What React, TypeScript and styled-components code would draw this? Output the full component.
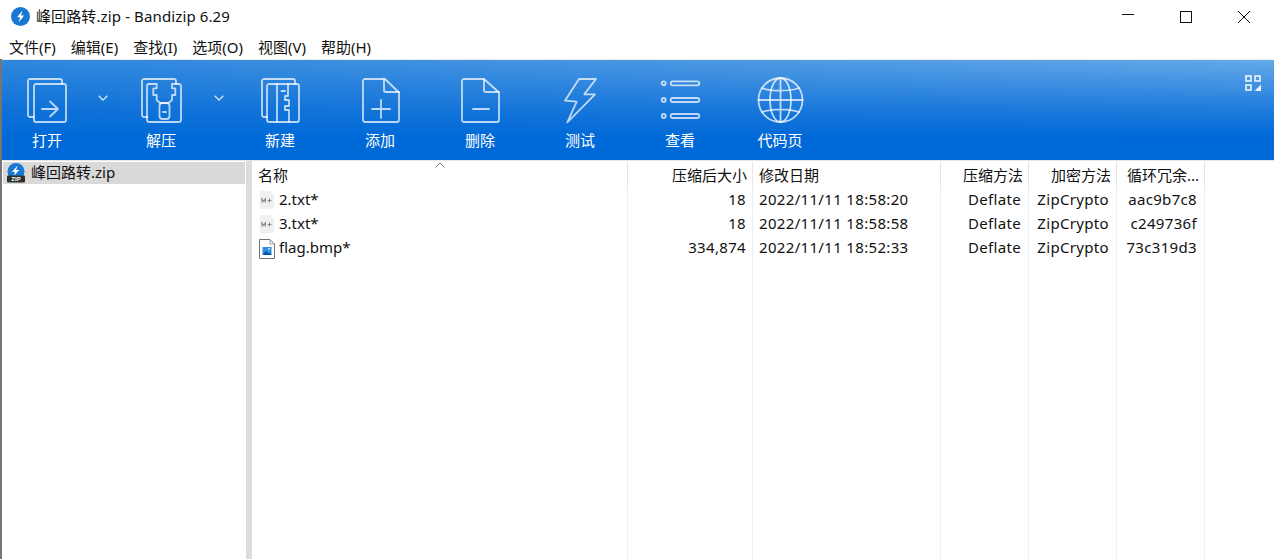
import * as React from "react";
import styled, {createGlobalStyle} from "styled-components";

const FONT = `"Noto Sans", "Noto Sans CJK SC", sans-serif`;
const COLUMNS = "376px 125px 188px 88px 88px 88px 1fr";

const GlobalStyle = createGlobalStyle`
  html, body { margin: 0; padding: 0; background: #fff; }
  body { font-family: ${FONT}; color: #111; overflow: hidden; }
`;

const Page = styled.div`
  display: flex;
  flex-direction: column;
  height: 559px;
  overflow: hidden;
`;

const TitleBar = styled.div`
  display: flex;
  align-items: center;
  height: 33px;
  padding-left: 11px;
  flex: none;
`;
const TitleText = styled.div`
  margin: 0 0 2px 6px;
  font-size: 15px;
  letter-spacing: 0.12px;
  line-height: 20px;
  flex: 1;
`;
const WinButton = styled.div`
  width: 58px;
  height: 33px;
  display: flex;
  align-items: center;
  justify-content: center;
`;
const WinButtons = styled.div`
  display: flex;
  margin-right: 1px;
`;

const MenuBar = styled.div`
  display: flex;
  align-items: center;
  gap: 15px;
  height: 26px;
  padding-left: 9px;
  font-size: 15px;
  flex: none;
`;
const MenuItem = styled.div`
  white-space: nowrap;
`;

const Main = styled.div`
  flex: 1;
  display: flex;
  flex-direction: column;
  border-left: 2px solid #757575;
  min-height: 0;
`;

const Toolbar = styled.div`
  flex: none;
  height: 100px;
  display: flex;
  border-top: 1px solid #ececec;
  border-bottom: 1px solid #e6e6e6;
  background:
    linear-gradient(180deg, rgba(0, 104, 214, 0) 0%, rgba(0, 104, 214, 0.7) 50%, #0069d8 78%),
    linear-gradient(90deg, #2f87dd 0%, #4f9ae3 60%, #65a9e9 100%);
`;
const ToolButton = styled.div<{$w: number}>`
  width: ${({$w}) => $w}px;
  display: flex;
  flex-direction: column;
  align-items: center;
  padding-top: 16px;
  flex: none;
  color: #fff;
  font-size: 15px;
  svg { display: block; }
`;
const ToolLabel = styled.div`
  margin-top: 4px;
  line-height: 24px;
`;
const Chevron = styled.div<{$w: number}>`
  width: ${({$w}) => $w}px;
  flex: none;
  display: flex;
  justify-content: center;
  align-items: flex-start;
  padding-top: 35px;
`;
const LayoutToggle = styled.div`
  margin: 14px 13px 0 auto;
`;

const Panes = styled.div`
  flex: 1;
  display: flex;
  min-height: 0;
`;
const TreePane = styled.div`
  width: 244px;
  flex: none;
  padding: 1px 1px 0 1px;
  box-sizing: border-box;
`;
const TreeRow = styled.div`
  display: flex;
  align-items: center;
  height: 22px;
  background: #d9d9d9;
  padding-left: 3px;
  font-size: 15px;
`;
const TreeLabel = styled.span`
  margin: 0 0 4px 5px;
`;
const Splitter = styled.div`
  width: 6px;
  flex: none;
  background: #dcdcdc;
`;

const Table = styled.div`
  flex: 1;
  display: flex;
  flex-direction: column;
  min-width: 0;
  position: relative;
`;
const Row = styled.div<{$fill?: boolean}>`
  display: grid;
  grid-template-columns: ${COLUMNS};
  flex: ${({$fill}) => ($fill ? 1 : "none")};
  height: ${({$fill}) => ($fill ? "auto" : "24px")};
  font-size: 15px;
  line-height: 23px;
  letter-spacing: 0.33px;
  white-space: nowrap;
`;
const HeaderRow = styled(Row)`
  height: 27px;
  line-height: 26px;
  letter-spacing: 0;
`;
const Cell = styled.div<{$right?: boolean; $pad?: number}>`
  box-sizing: border-box;
  border-right: 1px solid #e6f0fa;
  text-align: ${({$right}) => ($right ? "right" : "left")};
  padding: 0 ${({$pad}) => $pad ?? 6}px 0 6px;
  overflow: hidden;
`;
const HeadCell = styled(Cell)`
  border-right: 1px solid #e5e5e5;
  margin-top: 1px;
`;
const NameCell = styled(Cell)`
  display: flex;
  align-items: flex-start;
  padding-left: 7px;
  letter-spacing: 0;
  svg { display: block; flex: none; margin-top: 3px; }
`;
const FileName = styled.span`
  margin-left: 4px;
`;
const SortCaret = styled.div`
  position: absolute;
  left: 183px;
  top: 1px;
  svg { display: block; }
`;

const stroke = {fill: "none", stroke: "rgba(255,255,255,0.72)", strokeWidth: 1.8, strokeLinejoin: "round" as const, strokeLinecap: "round" as const};
const ToolIcon = ({children}: {children: React.ReactNode}) => (
  <svg width="48" height="48" viewBox="0 0 48 48" {...stroke}>{children}</svg>
);

const OpenIcon = () => (
  <ToolIcon>
    <path d="M11 41H7a2 2 0 0 1-2-2V5a2 2 0 0 1 2-2h30a2 2 0 0 1 2 2v3" />
    <rect x="11" y="8" width="32" height="38" rx="2" />
    <path d="M19 33h16M27 25.500l8 7.500-8 7.500" />
  </ToolIcon>
);
const ExtractIcon = () => (
  <ToolIcon>
    <path d="M10.500 41H7a2 2 0 0 1-2-2V5a2 2 0 0 1 2-2h30a2 2 0 0 1 2 2v3" />
    <path d="M19.700 8H12a2 2 0 0 0-2 2v34a2 2 0 0 0 2 2h30a2 2 0 0 0 2-2V10a2 2 0 0 0-2-2h-7v4.300h3.300V19H35v5l-3.500 3H23l-3.300-3v-5h-3.400v-6.700h3.400z" />
    <rect x="22.500" y="27" width="10" height="16" rx="3" />
    <path d="M26 36h3" />
  </ToolIcon>
);
const NewIcon = () => (
  <ToolIcon>
    <path d="M11 41H8a2 2 0 0 1-2-2V5a2 2 0 0 1 2-2h29a2 2 0 0 1 2 2v3" />
    <rect x="11" y="8" width="32" height="38" rx="2" />
    <path d="M21 8v38M32 8v12h-3v4h4v6h-4v4h4v12M25.500 15h3.500" />
  </ToolIcon>
);
const AddIcon = () => (
  <ToolIcon>
    <path d="M9 3h20l14 13.500V44a2 2 0 0 1-2 2H9a2 2 0 0 1-2-2V5a2 2 0 0 1 2-2z" />
    <path d="M28 3.500V14a2 2 0 0 0 2 2h13M25 24v18M16 33h18" />
  </ToolIcon>
);
const DeleteIcon = () => (
  <ToolIcon>
    <path d="M8 3h20l15 13.500V44a2 2 0 0 1-2 2H8a2 2 0 0 1-2-2V5a2 2 0 0 1 2-2z" />
    <path d="M28 3.500V14a2 2 0 0 0 2 2h13M17 33h16" />
  </ToolIcon>
);
const TestIcon = () => (
  <ToolIcon>
    <path d="M23 3h17L28.300 18.300H39L11.300 46.300l9.400-20.600L9 24.700z" />
  </ToolIcon>
);
const ViewIcon = () => (
  <ToolIcon>
    {[7.3, 24, 40].map(y => (
      <React.Fragment key={y}>
        <circle cx="7.700" cy={y} r="2" />
        <rect x="14.700" y={y - 2} width="28.600" height="4" rx="2" />
      </React.Fragment>
    ))}
  </ToolIcon>
);
const GlobeIcon = () => (
  <ToolIcon>
    <circle cx="24.500" cy="24" r="22" />
    <ellipse cx="24.500" cy="24" rx="10.500" ry="22" />
    <path d="M24.500 2v44M2.500 24h44M6 12c10 3.500 27 3.500 37 0M6 36c10-3.500 27-3.500 37 0" />
  </ToolIcon>
);
const ChevronIcon = () => (
  <svg width="10" height="6" viewBox="0 0 10 6" fill="none" stroke="rgba(255,255,255,0.8)" strokeWidth="1.3" style={{display: "block"}}>
    <path d="M.7.7 5 5 9.300.7" />
  </svg>
);
const GridToggleIcon = () => (
  <svg width="16" height="16" viewBox="0 0 16 16">
    <g fill="none" stroke="rgba(255,255,255,0.85)" strokeWidth="1.700">
      <rect x="1" y="1" width="5" height="5" />
      <rect x="10" y="1" width="5" height="5" />
      <rect x="1" y="10" width="5" height="5" />
    </g>
    <path d="M16 9.500V16H9.500z" fill="rgba(255,255,255,0.9)" />
  </svg>
);
const AppIcon = () => (
  <svg width="19" height="19" viewBox="0 0 19 19">
    <circle cx="9.500" cy="9.500" r="9.500" fill="#1a78d2" />
    <path d="M11.500 3.500 6 10.200h3.200L7.600 15.500l5.600-7h-3.300z" fill="#fff" />
  </svg>
);
const ZipIcon = () => (
  <svg width="20" height="20" viewBox="0 0 20 20">
    <circle cx="10" cy="8.500" r="8.500" fill="#1a78d2" />
    <path d="M11.500 2.500 6 9h3L7.800 13l5.400-6h-3z" fill="#fff" />
    <rect x="1" y="12.500" width="18" height="7" rx="1" fill="#2f2f2f" />
    <text x="10" y="18.300" fontFamily="Liberation Sans, sans-serif" fontSize="6" fontWeight="700" fill="#fff" textAnchor="middle">ZIP</text>
  </svg>
);
const TextFileIcon = () => (
  <svg width="16" height="18" viewBox="0 0 16 18">
    <path d="M1 0h10l4 4v14H1z" fill="#f0f0f0" />
    <path d="M3 11.500V8l1.700 2.200L6.400 8v3.500M8.500 9.500h4M10.500 7.500v4" fill="none" stroke="#8a8a8a" strokeWidth="1.200" />
  </svg>
);
const ImageFileIcon = () => (
  <svg width="16" height="20" viewBox="0 0 16 20">
    <path d="M.5.500h10.500l4.500 4.500v14.500H.5z" fill="#fff" stroke="#6c7480" />
    <path d="M11 .5V5h4.500" fill="none" stroke="#9aa1aa" />
    <rect x="3.500" y="8" width="9" height="8" fill="#2f8fe0" />
    <path d="M3.500 16l3.500-4 2.500 2.500 1.500-1 1.500 2.500z" fill="#0d4fa8" />
    <circle cx="10" cy="10" r="1" fill="#cfe8ff" />
  </svg>
);

const MENU = ["文件(F)", "编辑(E)", "查找(I)", "选项(O)", "视图(V)", "帮助(H)"];

const FILES = [
  {name: "2.txt*", size: "18", date: "2022/11/11 18:58:20", crc: "aac9b7c8", icon: <TextFileIcon />},
  {name: "3.txt*", size: "18", date: "2022/11/11 18:58:58", crc: "c249736f", icon: <TextFileIcon />},
  {name: "flag.bmp*", size: "334,874", date: "2022/11/11 18:52:33", crc: "73c319d3", icon: <ImageFileIcon />},
];

export default function App() {
  return (
    <Page>
      <GlobalStyle />
      <TitleBar>
        <AppIcon />
        <TitleText>峰回路转.zip - Bandizip 6.29</TitleText>
        <WinButtons>
          <WinButton>
            <svg width="12" height="12" viewBox="0 0 12 12" stroke="#111" strokeWidth="1"><path d="M0 3.500h12" /></svg>
          </WinButton>
          <WinButton>
            <svg width="12" height="12" viewBox="0 0 12 12" fill="none" stroke="#111" strokeWidth="1"><rect x=".5" y=".5" width="11" height="11" /></svg>
          </WinButton>
          <WinButton>
            <svg width="12" height="12" viewBox="0 0 12 12" stroke="#111" strokeWidth="1"><path d="M0 0l12 12M12 0 0 12" /></svg>
          </WinButton>
        </WinButtons>
      </TitleBar>
      <MenuBar>
        {MENU.map(m => <MenuItem key={m}>{m}</MenuItem>)}
      </MenuBar>
      <Main>
        <Toolbar>
          <ToolButton $w={90}><OpenIcon /><ToolLabel>打开</ToolLabel></ToolButton>
          <Chevron $w={22}><ChevronIcon /></Chevron>
          <ToolButton $w={94}><ExtractIcon /><ToolLabel>解压</ToolLabel></ToolButton>
          <Chevron $w={22}><ChevronIcon /></Chevron>
          <ToolButton $w={100}><NewIcon /><ToolLabel>新建</ToolLabel></ToolButton>
          <ToolButton $w={100}><AddIcon /><ToolLabel>添加</ToolLabel></ToolButton>
          <ToolButton $w={100}><DeleteIcon /><ToolLabel>删除</ToolLabel></ToolButton>
          <ToolButton $w={100}><TestIcon /><ToolLabel>测试</ToolLabel></ToolButton>
          <ToolButton $w={100}><ViewIcon /><ToolLabel>查看</ToolLabel></ToolButton>
          <ToolButton $w={100}><GlobeIcon /><ToolLabel>代码页</ToolLabel></ToolButton>
          <LayoutToggle><GridToggleIcon /></LayoutToggle>
        </Toolbar>
        <Panes>
          <TreePane>
            <TreeRow><ZipIcon /><TreeLabel>峰回路转.zip</TreeLabel></TreeRow>
          </TreePane>
          <Splitter />
          <Table>
            <HeaderRow>
              <HeadCell $pad={5}>名称</HeadCell>
              <HeadCell $right $pad={5}>压缩后大小</HeadCell>
              <HeadCell>修改日期</HeadCell>
              <HeadCell $right $pad={5}>压缩方法</HeadCell>
              <HeadCell $right $pad={5}>加密方法</HeadCell>
              <HeadCell $right $pad={5}>循环冗余...</HeadCell>
              <div />
            </HeaderRow>
            <SortCaret>
              <svg width="10" height="6" viewBox="0 0 10 6" fill="none" stroke="#777" strokeWidth="1"><path d="M.5 5.500 5 1l4.500 4.500" /></svg>
            </SortCaret>
            {FILES.map(f => (
              <Row key={f.name}>
                <NameCell>{f.icon}<FileName>{f.name}</FileName></NameCell>
                <Cell $right>{f.size}</Cell>
                <Cell>{f.date}</Cell>
                <Cell $right $pad={7}>Deflate</Cell>
                <Cell $right $pad={7}>ZipCrypto</Cell>
                <Cell $right $pad={7}>{f.crc}</Cell>
                <div />
              </Row>
            ))}
            <Row $fill>
              <Cell /><Cell /><Cell /><Cell /><Cell /><Cell /><div />
            </Row>
          </Table>
        </Panes>
      </Main>
    </Page>
  );
}
